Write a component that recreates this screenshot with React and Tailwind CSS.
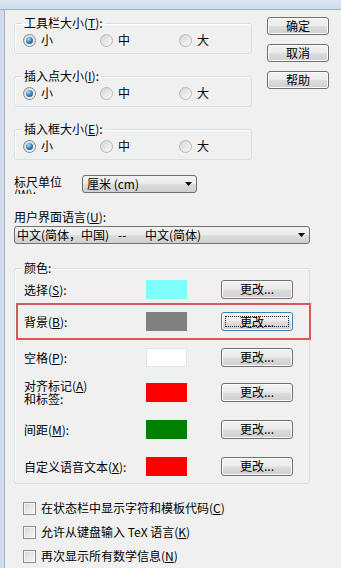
import React from "react";

const FONT = "font-['Noto_Sans_CJK_SC','Liberation_Sans',sans-serif]";

function Radio({ checked }) {
  return (
    <span
      className={`flex h-[13px] w-[13px] shrink-0 items-center justify-center rounded-full border ${
        checked ? "border-[#7d8a95]" : "border-[#b9b9b9]"
      } bg-[linear-gradient(135deg,#d4d4d4,#fbfbfb)]`}
    >
      {checked && (
        <span className="h-[7px] w-[7px] rounded-full bg-[radial-gradient(circle_at_35%_30%,#a8e2ff,#2f78b0_55%,#174d7a)]" />
      )}
    </span>
  );
}

function Check() {
  return (
    <span className="h-[13px] w-[13px] shrink-0 border border-[#8f8f8f] bg-[linear-gradient(135deg,#d6d6d6,#f8f8f8)] shadow-[inset_0_0_0_1px_#f4f4f4]" />
  );
}

function WinButton({ children, className = "", focused }) {
  return (
    <div
      className={`flex items-center justify-center rounded-[3px] border ${
        focused ? "border-[#3c7fb1]" : "border-[#707070]"
      } bg-[linear-gradient(#f2f2f2_0%,#ebebeb_48%,#dddddd_52%,#cfcfcf_100%)] shadow-[inset_0_0_0_1px_#fbfbfb] ${className}`}
    >
      {focused ? (
        <span className="m-[3px] flex flex-1 items-center justify-center self-stretch border border-dotted border-[#222]">
          {children}
        </span>
      ) : (
        children
      )}
    </div>
  );
}

function Arrow() {
  return (
    <svg width="7" height="4" viewBox="0 0 7 4" className="shrink-0">
      <path d="M0 0h7L3.5 4z" fill="#000" />
    </svg>
  );
}

function Select({ children, className = "" }) {
  return (
    <div
      className={`flex h-[18px] items-center justify-between rounded-[3px] border border-[#707070] bg-[linear-gradient(#f2f2f2_0%,#ebebeb_48%,#dddddd_52%,#cfcfcf_100%)] pr-[4px] ${className}`}
    >
      <div className="flex items-center">{children}</div>
      <Arrow />
    </div>
  );
}

function SizeGroup({ title, letter }) {
  return (
    <fieldset className="rounded-[3px] border border-[#d5dfe5] pt-[3px] pr-[7px] pb-[6px] pl-[7px] shadow-[inset_1px_1px_0_#fff]">
      <legend className="px-[2px] leading-[14px]">
        {title}(<u>{letter}</u>):
      </legend>
      <div className="grid h-[14px] grid-cols-[77px_79px_1fr] items-center pl-[1px]">
        <div className="flex items-center gap-[5px]">
          <Radio checked />
          <span>小</span>
        </div>
        <div className="flex items-center gap-[5px]">
          <Radio />
          <span>中</span>
        </div>
        <div className="flex items-center gap-[5px]">
          <Radio />
          <span>大</span>
        </div>
      </div>
    </fieldset>
  );
}

const colorRows = [
  { label: <>选择(<u>S</u>):</>, color: "bg-[#80ffff]", box: "mt-[4px] h-[20px]" },
  { label: <>背景(<u>B</u>):</>, color: "bg-[#808080]", box: "mt-[4px] h-[37px]", marked: true },
  { label: <>空格(<u>P</u>):</>, color: "bg-[#ffffff]", box: "mt-[7px] h-[20px]" },
  {
    label: (
      <>
        对齐标记(<u>A</u>)
        <br />
        和标签:
      </>
    ),
    color: "bg-[#ff0000]",
    box: "mt-[15px] h-[20px]",
  },
  { label: <>间距(<u>M</u>):</>, color: "bg-[#008000]", box: "mt-[17px] h-[20px]" },
  { label: <>自定义语音文本(<u>X</u>):</>, color: "bg-[#ff0000]", box: "mt-[17px] h-[20px]" },
];

const checks = [
  <>在状态栏中显示字符和模板代码(<u>C</u>)</>,
  <>允许从键盘输入 TeX 语言(<u>K</u>)</>,
  <>再次显示所有数学信息(<u>N</u>)</>,
];

export default function App() {
  return (
    <div className={`flex h-[568px] w-[341px] flex-col overflow-hidden bg-[#f0f0f0] text-[12px] leading-[14px] text-black ${FONT}`}>
      <div className="h-[10px] shrink-0 border-b border-[#a9b3bf] bg-[linear-gradient(#dde8f4,#cddbeb)]" />
      <div className="flex flex-1">
        <div className="w-[5px] shrink-0 border-r border-[#a9b3bf] bg-[#cddbeb]" />
        <div className="flex-1 pt-[6px] pl-[9px]">
          {/* top: size groups + dialog buttons */}
          <div className="flex">
            <div className="flex w-[238px] flex-col gap-[15px]">
              <SizeGroup title="工具栏大小" letter="T" />
              <SizeGroup title="插入点大小" letter="I" />
              <SizeGroup title="插入框大小" letter="E" />
            </div>
            <div className="mt-[1px] ml-[15px] flex w-[62px] flex-col gap-[9px]">
              <WinButton className="h-[18px]">确定</WinButton>
              <WinButton className="h-[18px]">取消</WinButton>
              <WinButton className="h-[18px]">帮助</WinButton>
            </div>
          </div>

          {/* ruler unit */}
          <div className="mt-[15px] flex items-start">
            <div className="h-[19px] w-[62px] overflow-hidden pt-[1px] leading-[12px]">
              标尺单位(<u>W</u>):
            </div>
            <Select className="ml-[6px] w-[115px] pl-[4px]">厘米 (cm)</Select>
          </div>

          {/* UI language */}
          <div className="mt-[16px]">
            用户界面语言(<u>U</u>):
          </div>
          <Select className="mt-[2px] w-[296px] pl-[2px]">
            <span className="w-[101px]">中文(简体，中国)</span>
            <span className="w-[27px]">--</span>
            <span>中文(简体)</span>
          </Select>

          {/* colours */}
          <fieldset className="mt-[17px] w-[296px] rounded-[3px] border border-[#d5dfe5] pr-[7px] pb-[7px] pl-[7px] shadow-[inset_1px_1px_0_#fff]">
            <legend className="px-[2px] leading-[14px]">颜色:</legend>
            {colorRows.map((row, i) => (
              <div
                key={i}
                className={`flex items-center ${row.box} ${
                  row.marked ? "-mr-[9px] -ml-[6px] border-2 border-[#d45a5a] pl-[6px]" : "pl-[2px]"
                }`}
              >
                <div className="w-[122px] leading-[13px]">{row.label}</div>
                <div className={`h-[19px] w-[41px] ${row.color} ${row.color === "bg-[#ffffff]" ? "border border-[#e2e2e2]" : ""}`} />
                <WinButton className="ml-[34px] h-[19px] w-[72px]" focused={row.marked}>
                  更改...
                </WinButton>
              </div>
            ))}
          </fieldset>

          {/* checkboxes */}
          <div className="mt-[17px] flex flex-col gap-[10px] pl-[9px]">
            {checks.map((c, i) => (
              <div key={i} className="flex h-[14px] items-center gap-[5px]">
                <Check />
                <span>{c}</span>
              </div>
            ))}
          </div>
        </div>
      </div>
    </div>
  );
}
